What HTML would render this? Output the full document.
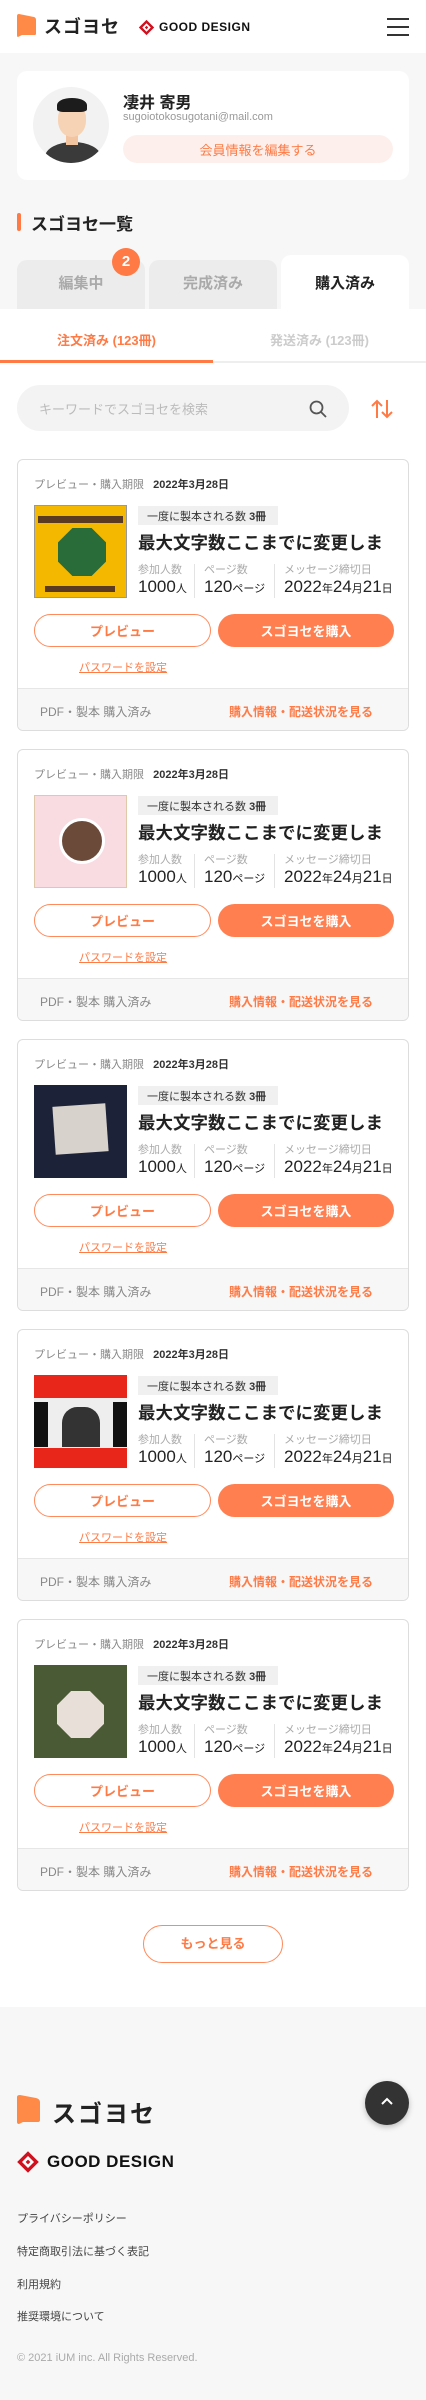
<!DOCTYPE html>
<html><head><meta charset="utf-8"><style>
*{box-sizing:border-box;margin:0;padding:0}
body{width:426px;height:2400px;position:relative;background:#f7f7f7;font-family:"Liberation Sans","Noto Sans CJK JP",sans-serif;color:#222;overflow:hidden}
.a{position:absolute}
.hdr{left:0;top:0;width:426px;height:53px;background:#fff}
.white{left:0;top:309px;width:426px;height:1698px;background:#fff}
.card{position:absolute;left:17px;width:392px;height:272px;border:1px solid #ddd;border-radius:6px;background:#fff;overflow:hidden}
.card .a{white-space:nowrap}
.cf{left:0;top:228px;width:392px;height:44px;background:#f7f7f7;border-top:1px solid #e6e6e6}
.btn{height:33px;border-radius:17px;font-size:13px;font-weight:bold;display:flex;align-items:center;justify-content:center}
.lab{font-size:11px;color:#aaa;top:101px}
.val{font-size:17px;top:117px;color:#222}
.val small{font-size:11px}
.vl{width:1px;height:34px;background:#e3e3e3;top:104px}
.lk{font-size:11px;color:#444;left:17px}
.ttl{left:120px;top:70px;font-size:17.5px;font-weight:bold}
</style></head><body>
<div class="a hdr"></div>
<svg class="a" style="left:16px;top:14px" width="21" height="23" viewBox="0 0 21 23"><path d="M1 2 Q1 0 3 0 L18 3 Q20 3.5 20 6 V20 Q20 21 18 21 H6 L2 23 Q1 23 1 21Z" fill="#ff8a48"/></svg>
<div class="a" style="left:44px;top:13px;font-size:18px;font-weight:bold;letter-spacing:1px;color:#222">スゴヨセ</div>
<svg class="a" style="left:138px;top:19px" width="17" height="17" viewBox="0 0 20 20"><path d="M10 1 L19 10 L10 19 L1 10Z" fill="#d0101e"/><path d="M10 5 L15 10 L10 15 L5 10Z" fill="#fff"/><path d="M10 8 L12 10 L10 12 L8 10Z" fill="#d0101e"/></svg>
<div class="a" style="left:159px;top:20px;font-size:12px;font-weight:bold;color:#111;letter-spacing:0.5px">GOOD DESIGN</div>
<div class="a" style="left:387px;top:18px;width:22px;height:2px;background:#333"></div>
<div class="a" style="left:387px;top:26px;width:22px;height:2px;background:#333"></div>
<div class="a" style="left:387px;top:34px;width:22px;height:2px;background:#333"></div>

<div class="a" style="left:17px;top:71px;width:392px;height:109px;background:#fff;border-radius:10px"></div>
<div class="a" style="left:33px;top:87px;width:76px;height:76px;border-radius:50%;background:#f2f2f2;overflow:hidden">
 <div class="a" style="left:12px;top:55px;width:56px;height:30px;border-radius:50% 50% 0 0;background:#3a3a3a"></div>
 <div class="a" style="left:33px;top:44px;width:12px;height:14px;background:#f2c4a0"></div>
 <div class="a" style="left:25px;top:18px;width:28px;height:32px;border-radius:40% 40% 50% 50%;background:#f7d3b5"></div>
 <div class="a" style="left:24px;top:11px;width:30px;height:14px;border-radius:50% 50% 20% 20%;background:#1c1c1c"></div>
</div>
<div class="a" style="left:123px;top:89px;font-size:16px;font-weight:bold">凄井 寄男</div>
<div class="a" style="left:123px;top:111px;font-size:11px;color:#999">sugoiotokosugotani@mail.com</div>
<div class="a" style="left:123px;top:135px;width:270px;height:28px;border-radius:14px;background:#fdf0ec;color:#ff7a45;font-size:13px;display:flex;align-items:center;justify-content:center">会員情報を編集する</div>

<div class="a" style="left:17px;top:213px;width:4px;height:18px;border-radius:2px;background:#ff7a45"></div>
<div class="a" style="left:31px;top:210px;font-size:17px;font-weight:bold">スゴヨセ一覧</div>

<div class="a" style="left:17px;top:260px;width:128px;height:52px;border-radius:10px 10px 0 0;background:#ececec;color:#aaa;font-size:15px;font-weight:bold;text-align:center;padding-top:12px">編集中</div>
<div class="a" style="left:149px;top:260px;width:128px;height:52px;border-radius:10px 10px 0 0;background:#ececec;color:#aaa;font-size:15px;font-weight:bold;text-align:center;padding-top:12px">完成済み</div>
<div class="a" style="left:281px;top:255px;width:128px;height:57px;border-radius:10px 10px 0 0;background:#fff;color:#222;font-size:15px;font-weight:bold;text-align:center;padding-top:17px">購入済み</div>
<div class="a" style="left:112px;top:248px;width:28px;height:28px;border-radius:50%;background:#ff7a45;color:#fff;font-size:15px;font-weight:bold;text-align:center;line-height:28px">2</div>

<div class="a white"></div>
<div class="a" style="left:0;top:330px;width:213px;text-align:center;font-size:13px;font-weight:bold;color:#ff7a45">注文済み (123冊)</div>
<div class="a" style="left:213px;top:330px;width:213px;text-align:center;font-size:13px;font-weight:bold;color:#ccc">発送済み (123冊)</div>
<div class="a" style="left:0;top:360px;width:213px;height:3px;background:#ff7a45"></div>
<div class="a" style="left:213px;top:361px;width:213px;height:2px;background:#eee"></div>

<div class="a" style="left:17px;top:385px;width:332px;height:46px;border-radius:23px;background:#f3f3f3"></div>
<div class="a" style="left:39px;top:399px;font-size:13px;color:#bbb">キーワードでスゴヨセを検索</div>
<svg class="a" style="left:309px;top:400px" width="18" height="18" viewBox="0 0 18 18"><circle cx="7.5" cy="7.5" r="6" fill="none" stroke="#555" stroke-width="1.8"/><path d="M12 12 L17 17" stroke="#555" stroke-width="1.8"/></svg>
<svg class="a" style="left:371px;top:399px" width="22" height="20" viewBox="0 0 22 20"><path d="M6 19 V2 M1 7 L6 2 L11 7 M16 1 V18 M11 13 L16 18 L21 13" fill="none" stroke="#ff7a45" stroke-width="2"/></svg>

<div class="card" style="top:459px">
<div class="a" style="left:16px;top:16px;font-size:11px;color:#888">プレビュー・購入期限&nbsp;&nbsp; <b style="color:#333">2022年3月28日</b></div>
<div class="a" style="left:16px;top:45px;width:93px;height:93px;background:#f5b800;border:1px solid #999"><div class="a" style="left:3px;top:10px;width:85px;height:7px;background:#5a3a20"></div><div class="a" style="left:23px;top:22px;width:48px;height:48px;background:#2a6b3a;clip-path:polygon(30% 0,70% 0,100% 30%,100% 70%,70% 100%,30% 100%,0 70%,0 30%)"></div><div class="a" style="left:10px;top:80px;width:70px;height:6px;background:#5a3a20"></div></div>
<div class="a" style="left:120px;top:46px;width:140px;height:19px;background:#f0f0f0;font-size:11px;color:#333;padding:2px 9px">一度に製本される数 <b>3冊</b></div>
<div class="a ttl">最大文字数ここまでに変更しま</div>
<div class="a lab" style="left:120px">参加人数</div><div class="a vl" style="left:176px"></div>
<div class="a lab" style="left:186px">ページ数</div><div class="a vl" style="left:256px"></div>
<div class="a lab" style="left:266px">メッセージ締切日</div>
<div class="a val" style="left:120px">1000<small>人</small></div>
<div class="a val" style="left:186px">120<small>ページ</small></div>
<div class="a val" style="left:266px">2022<small>年</small>24<small>月</small>21<small>日</small></div>
<div class="a btn" style="left:16px;top:154px;width:177px;border:1.5px solid #ff8a5c;color:#ff7a45">プレビュー</div>
<div class="a btn" style="left:200px;top:154px;width:176px;background:#ff7f50;color:#fff">スゴヨセを購入</div>
<div class="a" style="left:61px;top:199px;font-size:11px;color:#ff7a45;text-decoration:underline">パスワードを設定</div>
<div class="a cf"></div>
<div class="a" style="left:22px;top:243px;font-size:12px;color:#888">PDF・製本 購入済み</div>
<div class="a" style="left:211px;top:243px;font-size:12px;font-weight:bold;color:#ff7a45">購入情報・配送状況を見る</div>
</div>

<div class="card" style="top:749px"><div class="a" style="left:16px;top:16px;font-size:11px;color:#888">プレビュー・購入期限&nbsp;&nbsp; <b style="color:#333">2022年3月28日</b></div>
<div class="a" style="left:16px;top:45px;width:93px;height:93px;background:#f9dbe2;border:1px solid #e0c9a8"><div class="a" style="left:24px;top:22px;width:46px;height:46px;border-radius:50%;background:#6b4a3a;border:3px solid #fff"></div></div>
<div class="a" style="left:120px;top:46px;width:140px;height:19px;background:#f0f0f0;font-size:11px;color:#333;padding:2px 9px">一度に製本される数 <b>3冊</b></div>
<div class="a ttl">最大文字数ここまでに変更しま</div>
<div class="a lab" style="left:120px">参加人数</div><div class="a vl" style="left:176px"></div><div class="a lab" style="left:186px">ページ数</div><div class="a vl" style="left:256px"></div><div class="a lab" style="left:266px">メッセージ締切日</div>
<div class="a val" style="left:120px">1000<small>人</small></div><div class="a val" style="left:186px">120<small>ページ</small></div><div class="a val" style="left:266px">2022<small>年</small>24<small>月</small>21<small>日</small></div>
<div class="a btn" style="left:16px;top:154px;width:177px;border:1.5px solid #ff8a5c;color:#ff7a45">プレビュー</div><div class="a btn" style="left:200px;top:154px;width:176px;background:#ff7f50;color:#fff">スゴヨセを購入</div>
<div class="a" style="left:61px;top:199px;font-size:11px;color:#ff7a45;text-decoration:underline">パスワードを設定</div>
<div class="a cf"></div><div class="a" style="left:22px;top:243px;font-size:12px;color:#888">PDF・製本 購入済み</div><div class="a" style="left:211px;top:243px;font-size:12px;font-weight:bold;color:#ff7a45">購入情報・配送状況を見る</div></div>

<div class="card" style="top:1039px"><div class="a" style="left:16px;top:16px;font-size:11px;color:#888">プレビュー・購入期限&nbsp;&nbsp; <b style="color:#333">2022年3月28日</b></div>
<div class="a" style="left:16px;top:45px;width:93px;height:93px;background:#1c2238"><div class="a" style="left:20px;top:20px;width:53px;height:48px;background:#d8d2cc;transform:rotate(-4deg)"></div></div>
<div class="a" style="left:120px;top:46px;width:140px;height:19px;background:#f0f0f0;font-size:11px;color:#333;padding:2px 9px">一度に製本される数 <b>3冊</b></div>
<div class="a ttl">最大文字数ここまでに変更しま</div>
<div class="a lab" style="left:120px">参加人数</div><div class="a vl" style="left:176px"></div><div class="a lab" style="left:186px">ページ数</div><div class="a vl" style="left:256px"></div><div class="a lab" style="left:266px">メッセージ締切日</div>
<div class="a val" style="left:120px">1000<small>人</small></div><div class="a val" style="left:186px">120<small>ページ</small></div><div class="a val" style="left:266px">2022<small>年</small>24<small>月</small>21<small>日</small></div>
<div class="a btn" style="left:16px;top:154px;width:177px;border:1.5px solid #ff8a5c;color:#ff7a45">プレビュー</div><div class="a btn" style="left:200px;top:154px;width:176px;background:#ff7f50;color:#fff">スゴヨセを購入</div>
<div class="a" style="left:61px;top:199px;font-size:11px;color:#ff7a45;text-decoration:underline">パスワードを設定</div>
<div class="a cf"></div><div class="a" style="left:22px;top:243px;font-size:12px;color:#888">PDF・製本 購入済み</div><div class="a" style="left:211px;top:243px;font-size:12px;font-weight:bold;color:#ff7a45">購入情報・配送状況を見る</div></div>

<div class="card" style="top:1329px"><div class="a" style="left:16px;top:16px;font-size:11px;color:#888">プレビュー・購入期限&nbsp;&nbsp; <b style="color:#333">2022年3月28日</b></div>
<div class="a" style="left:16px;top:45px;width:93px;height:93px;background:#e8261a"><div class="a" style="left:0;top:23px;width:93px;height:50px;background:#eee"></div><div class="a" style="left:0;top:27px;width:14px;height:45px;background:#111"></div><div class="a" style="left:79px;top:27px;width:14px;height:45px;background:#111"></div><div class="a" style="left:28px;top:32px;width:38px;height:40px;background:#333;border-radius:40% 40% 0 0"></div></div>
<div class="a" style="left:120px;top:46px;width:140px;height:19px;background:#f0f0f0;font-size:11px;color:#333;padding:2px 9px">一度に製本される数 <b>3冊</b></div>
<div class="a ttl">最大文字数ここまでに変更しま</div>
<div class="a lab" style="left:120px">参加人数</div><div class="a vl" style="left:176px"></div><div class="a lab" style="left:186px">ページ数</div><div class="a vl" style="left:256px"></div><div class="a lab" style="left:266px">メッセージ締切日</div>
<div class="a val" style="left:120px">1000<small>人</small></div><div class="a val" style="left:186px">120<small>ページ</small></div><div class="a val" style="left:266px">2022<small>年</small>24<small>月</small>21<small>日</small></div>
<div class="a btn" style="left:16px;top:154px;width:177px;border:1.5px solid #ff8a5c;color:#ff7a45">プレビュー</div><div class="a btn" style="left:200px;top:154px;width:176px;background:#ff7f50;color:#fff">スゴヨセを購入</div>
<div class="a" style="left:61px;top:199px;font-size:11px;color:#ff7a45;text-decoration:underline">パスワードを設定</div>
<div class="a cf"></div><div class="a" style="left:22px;top:243px;font-size:12px;color:#888">PDF・製本 購入済み</div><div class="a" style="left:211px;top:243px;font-size:12px;font-weight:bold;color:#ff7a45">購入情報・配送状況を見る</div></div>

<div class="card" style="top:1619px"><div class="a" style="left:16px;top:16px;font-size:11px;color:#888">プレビュー・購入期限&nbsp;&nbsp; <b style="color:#333">2022年3月28日</b></div>
<div class="a" style="left:16px;top:45px;width:93px;height:93px;background:#4a5a34"><div class="a" style="left:23px;top:26px;width:47px;height:47px;background:#e8e0d8;clip-path:polygon(30% 0,70% 0,100% 30%,100% 70%,70% 100%,30% 100%,0 70%,0 30%)"></div></div>
<div class="a" style="left:120px;top:46px;width:140px;height:19px;background:#f0f0f0;font-size:11px;color:#333;padding:2px 9px">一度に製本される数 <b>3冊</b></div>
<div class="a ttl">最大文字数ここまでに変更しま</div>
<div class="a lab" style="left:120px">参加人数</div><div class="a vl" style="left:176px"></div><div class="a lab" style="left:186px">ページ数</div><div class="a vl" style="left:256px"></div><div class="a lab" style="left:266px">メッセージ締切日</div>
<div class="a val" style="left:120px">1000<small>人</small></div><div class="a val" style="left:186px">120<small>ページ</small></div><div class="a val" style="left:266px">2022<small>年</small>24<small>月</small>21<small>日</small></div>
<div class="a btn" style="left:16px;top:154px;width:177px;border:1.5px solid #ff8a5c;color:#ff7a45">プレビュー</div><div class="a btn" style="left:200px;top:154px;width:176px;background:#ff7f50;color:#fff">スゴヨセを購入</div>
<div class="a" style="left:61px;top:199px;font-size:11px;color:#ff7a45;text-decoration:underline">パスワードを設定</div>
<div class="a cf"></div><div class="a" style="left:22px;top:243px;font-size:12px;color:#888">PDF・製本 購入済み</div><div class="a" style="left:211px;top:243px;font-size:12px;font-weight:bold;color:#ff7a45">購入情報・配送状況を見る</div></div>

<div class="a" style="left:143px;top:1925px;width:140px;height:38px;border:1.5px solid #ff8a5c;border-radius:19px;color:#ff7a45;font-size:13px;font-weight:bold;text-align:center;line-height:35px;background:#fff">もっと見る</div>

<svg class="a" style="left:17px;top:2095px" width="23" height="29" viewBox="0 0 23 29"><path d="M0 2 Q0 0 3 0 L19 3 Q23 4 23 7 V25 Q23 27 21 27 H6 L2 29 Q0 29 0 27Z" fill="#ff8a48"/></svg>
<div class="a" style="left:52px;top:2094px;font-size:24px;font-weight:bold;letter-spacing:2px;color:#222">スゴヨセ</div>
<svg class="a" style="left:16px;top:2150px" width="24" height="24" viewBox="0 0 20 20"><path d="M10 1 L19 10 L10 19 L1 10Z" fill="#d0101e"/><path d="M10 5 L15 10 L10 15 L5 10Z" fill="#fff"/><path d="M10 8 L12 10 L10 12 L8 10Z" fill="#d0101e"/></svg>
<div class="a" style="left:47px;top:2152px;font-size:17px;font-weight:bold;color:#111;letter-spacing:0.5px">GOOD DESIGN</div>
<div class="a" style="left:365px;top:2081px;width:44px;height:44px;border-radius:50%;background:#333;box-shadow:0 2px 6px rgba(0,0,0,.25)"></div>
<svg class="a" style="left:380px;top:2096px" width="14" height="10" viewBox="0 0 14 10"><path d="M2 8 L7 3 L12 8" fill="none" stroke="#fff" stroke-width="2"/></svg>
<div class="a lk" style="top:2210px">プライバシーポリシー</div>
<div class="a lk" style="top:2243px">特定商取引法に基づく表記</div>
<div class="a lk" style="top:2276px">利用規約</div>
<div class="a lk" style="top:2308px">推奨環境について</div>
<div class="a" style="left:17px;top:2352px;font-size:11px;color:#aaa">© 2021 iUM inc. All Rights Reserved.</div>
</body></html>
